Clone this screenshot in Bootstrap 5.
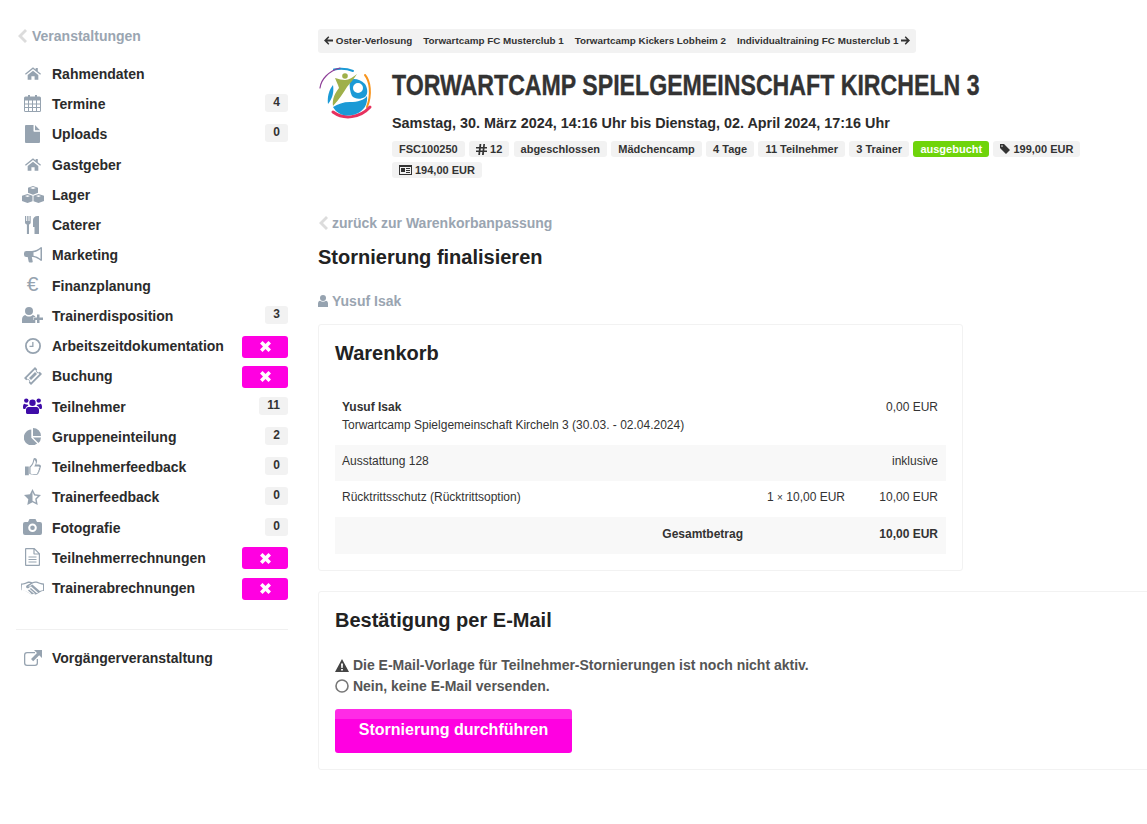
<!DOCTYPE html>
<html lang="de">
<head>
    <meta charset="UTF-8">
    <meta name="viewport" content="width=device-width, initial-scale=1.0">
    <title>Stornierung finalisieren</title>
    <link rel="stylesheet" href="https://cdn.jsdelivr.net/npm/bootstrap@5.3.0/dist/css/bootstrap.min.css">
    <style>
        body { font-family: "Liberation Sans", Arial, sans-serif; color: #333; overflow-x: hidden; font-size: 12px; }
        .page-wrap { padding-top: 26px; }
        .side-col { width: 272px; margin-left: 16px; flex: none; }
        .main-col { margin-left: 30px; width: 829px; flex: none; padding-top: 3px; }
        .grey-link { color: #9aa5b1; font-weight: 700; font-size: 14px; text-decoration: none; }
        .side-back { height: 20px; display: flex; align-items: center; margin-bottom: 13.2px; }
        .chev { width: 9px; height: 14px; margin-right: 5px; margin-left: 2px; fill: #dcdcdc; }
        .side-item { height: 30.25px; display: flex; align-items: center; color: #2b2b2b; font-size: 14px; font-weight: 700; text-decoration: none; position: relative; }
        .side-ic { width: 36px; flex: none; display: flex; justify-content: center; padding-right: 3px; margin-top: -2px; }
        .side-ic svg { fill: #96a3b0; display: block; }
        .side-ic .on { fill: #3f0ca8; }
        .euro-ic { font-size: 21px; font-weight: 400; color: #96a3b0; line-height: 1; margin-top: -5px; }
        .count-pill { margin-left: auto; background: #f2f2f2; color: #333; border-radius: 3px; font-size: 12px; font-weight: 700; line-height: 1; padding: 2px 8px 4px; margin-top: -3px; height: 18px; }
        .x-pill { margin-left: auto; width: 46px; height: 22px; background: #ff00e1; border-radius: 3px; display: flex; align-items: center; justify-content: center; }
        .x-pill svg { fill: #fff; }
        .side-rule { border-top: 1px solid #f0f0f0; margin: 25px 0 14px; opacity: 1; }
        .pager-bar { display: inline-flex; align-items: center; background: #f2f2f2; border-radius: 3px; height: 24px; padding: 0 6px; font-size: 9.85px; font-weight: 700; color: #333; gap: 11px; white-space: nowrap; }
        .pager-bar svg { fill: #333; vertical-align: -1px; }
        .event-head { display: flex; margin-top: 13px; }
        .event-logo { width: 58px; flex: none; margin-right: 16px; height: 56px; }
        .event-title { font-weight: 700; font-size: 29px; line-height: 38px; color: #333; margin: 0; white-space: nowrap; transform: scaleX(.798); transform-origin: left center; -webkit-text-stroke: .35px #333; }
        .event-date { font-size: 14.4px; font-weight: 700; color: #2b2b2b; margin: 9px 0 0; line-height: 20px; }
        .tag-row { display: flex; flex-wrap: wrap; gap: 5px 4.3px; margin-top: 8px; width: 720px; }
        .tag-pill { background: #f2f2f2; color: #333; font-size: 11px; font-weight: 700; border-radius: 3px; padding: 0 7px; height: 16px; line-height: 15px; display: inline-flex; align-items: center; gap: 3px; }
        .tag-pill svg { fill: #333; }
        .tag-green { background: #6fd40b; color: #fff; }
        .back-row { margin-top: 36px; height: 18px; display: flex; align-items: center; }
        .back-row .chev { margin-left: 1px; margin-right: 4px; }
        .page-h { font-size: 20px; font-weight: 700; color: #222; margin: 12px 0 0; line-height: 26px; }
        .person-row { margin-top: 21px; height: 20px; display: flex; align-items: center; gap: 4px; }
        .person-row svg { fill: #96a3b0; }
        .box-card { border: 1px solid #f2f2f2; border-radius: 3px; padding: 15px 16px 16px; }
        .box-h { font-size: 20px; font-weight: 700; color: #222; margin: 0; line-height: 26px; }
        .cart-card { width: 645px; margin-top: 13px; height: 247px; }
        .cart-table { margin: 22px 0 0; font-size: 12px; color: #333; }
        .cart-table td { padding: 0 8px 4px 7px; border: 0; vertical-align: middle; background: transparent; box-shadow: none; }
        .cart-table .tr-plain td { height: 36px; }
        .cart-table .tr-shade td { height: 36px; background: #f8f8f8; }
        .cart-table .tr-total td { height: 37px; background: #f8f8f8; }
        .cart-table .tr-first td { height: 57px; line-height: 18px; vertical-align: top; padding-top: 10px; }
        .times-sign { font-size: 10px; }
        .mail-card { width: 845px; margin-top: 20px; height: 179px; }
        .mail-lines { margin-top: 22px; font-size: 14px; font-weight: 700; color: #555; line-height: 21px; }
        .mail-lines svg { vertical-align: -2px; }
        .go-btn { display: block; width: 237px; height: 44px; margin-top: 12px; padding: 0 0 2px; border: 0; border-radius: 3px; font-size: 16px; font-weight: 700; color: #fff; background: linear-gradient(#ff2be6 0, #ff2be6 10px, #ff00e1 10px); }
        .go-btn:hover { color: #fff; background: #ff00e1; }
    </style>
</head>
<body>
    <svg width="0" height="0" class="position-absolute">
        <defs>
            <symbol id="ic-home" viewBox="0 0 18 14"><path d="M9 0 L12 2.400V.8h2.400v3.600L18 7.300l-.9 1L9 1.800.9 8.300 0 7.300zM3 8.600 9 3.800l6 4.800V14h-4.200v-4H7.200V14H3z"/></symbol>
            <symbol id="ic-cal" viewBox="0 0 17 17"><path fill-rule="evenodd" d="M3 1.500h1V0h2v1.500h5V0h2v1.500h2.500a1.500 1.500 0 0 1 1.500 1.500v12.500a1.500 1.500 0 0 1-1.500 1.500h-14A1.500 1.500 0 0 1 0 15.500V3a1.500 1.500 0 0 1 1.500-1.500zM1 5.500v3h3v-3zm4 0v3h3v-3zm4 0v3h3v-3zm4 0v3h3v-3zM1 9.500v2.500h3V9.500zm4 0v2.500h3V9.500zm4 0v2.500h3V9.500zm4 0v2.500h3V9.500zM1 13v3h3v-3zm4 0v3h3v-3zm4 0v3h3v-3zm4 0v3h3v-3z"/></symbol>
            <symbol id="ic-file" viewBox="0 0 15 18"><path d="M0 1a1 1 0 0 1 1-1h7.500v6a.8.8 0 0 0 .8.8H15V17a1 1 0 0 1-1 1H1a1 1 0 0 1-1-1zM10 0l5 5.300h-5z"/></symbol>
            <symbol id="ic-cubes" viewBox="0 0 22 17"><path d="M11 0l5 1.800v5l-5 1.900-5-1.900v-5zM8 2l3 1.100L14 2l-3-1zM5.500 8l5 1.800v5.400l-5 1.800-5.500-1.900V9.800zM16.500 8l5.500 1.800v5.300L16.500 17l-5-1.800V9.800zM3 10.100l2.500.9 2.500-.9-2.500-.9zM14 10.100l2.500.9 2.500-.9-2.500-.9z"/></symbol>
            <symbol id="ic-fork" viewBox="0 0 15 18"><path d="M0 0h1.200v5h1V0h1.300v5h1V0h1.200v6.500c0 1-.7 1.800-1.700 2.100V18H1.900V8.600C.8 8.300 0 7.500 0 6.500zM9.500 18V11H8V4c0-2.200 1.800-4 4.500-4H14v18z"/></symbol>
            <symbol id="ic-horn" viewBox="0 0 18 16"><path fill-rule="evenodd" d="M17 0a1 1 0 0 1 1 1v4.300a1.800 1.800 0 0 1 0 3.400V13a1 1 0 0 1-1 1c-2.500-2-5-3.500-8-4H7.800l.9 4.300c.1.700-.3 1.300-1 1.300H5.700c-.5 0-.9-.3-1-.8L3.700 10H2.300A2.300 2.300 0 0 1 0 7.700V6.300A2.300 2.300 0 0 1 2.300 4H8c3.500-.3 6.500-2 9-4zM16.500 2c-2.200 1.800-4.500 3-7 3.300v3.400c2.500.3 4.800 1.500 7 3.300z"/></symbol>
            <symbol id="ic-userplus" viewBox="0 0 21 16"><circle cx="7" cy="4" r="4"/><path d="M0 16v-3.500C0 10 1.500 8.300 3.300 8c1 1 2.300 1.500 3.700 1.500S9.700 9 10.700 8c1.200.2 2.200 1 2.800 2h-2v3H13.300v3zM15 7.500h2.500v3H21v2.500h-3.500v3H15v-3h-3v-2.500h3z"/></symbol>
            <symbol id="ic-clock" viewBox="0 0 16 16"><path fill-rule="evenodd" d="M8 0a8 8 0 1 1 0 16A8 8 0 0 1 8 0zm0 1.800a6.200 6.200 0 1 0 0 12.400A6.200 6.200 0 0 0 8 1.800zM7.200 4h1.300v5H4.500V7.700h2.700z"/></symbol>
            <symbol id="ic-ticket" viewBox="0 0 18 18"><path fill-rule="evenodd" d="M11 0l2.200 2.200a1.800 1.800 0 0 0 2.600 2.600L18 7 7 18l-2.200-2.200a1.800 1.800 0 0 0-2.600-2.600L0 11zM11 2.600 2.600 11l.9.900c1.100-.2 2.300.9 2.600 2.600l.9.900L15.400 7l-.8-.8c-1.100.3-2.400-.9-2.800-2.800zM11 5l2 2-6 6-2-2z"/></symbol>
            <symbol id="ic-users" viewBox="0 0 19 16"><circle cx="9.500" cy="4.700" r="3.200"/><circle cx="3.300" cy="2.600" r="2.200"/><circle cx="15.700" cy="2.600" r="2.200"/><path d="M5 9h9c1.300.3 2 1.500 2 3v2.500c0 .9-.7 1.500-1.500 1.500h-10C3.700 16 3 15.400 3 14.500V12c0-1.500.7-2.700 2-3zM0 9c0-2 .6-3 1.500-3.200.8.600 1.700.9 3 .7.300.6.700 1 1 1.300-1.500.3-2.800 1.400-3.200 3.200H1c-.6 0-1-.4-1-2zM19 9c0 1.600-.4 2-1 2h-1.300c-.4-1.800-1.700-2.900-3.200-3.200.3-.3.700-.7 1-1.300 1.300.2 2.200-.1 3-.7.900.2 1.500 1.200 1.500 3.200z"/></symbol>
            <symbol id="ic-pie" viewBox="0 0 17 17"><path d="M7.300 1.500v8.200l5.800 5.800A8 8 0 1 1 7.300 1.500zM9 0a8 8 0 0 1 8 8H9zM9 9.500h8a8 8 0 0 1-2.500 5.500z"/></symbol>
            <symbol id="ic-thumb" viewBox="0 0 16 18"><path fill-rule="evenodd" d="M0 8.500h3.800v8.800H0zM9.500 0c1.600 0 2.600 1.200 2.600 3 0 1.200-.5 2.500-1 3.400h3c1 0 1.900.9 1.900 1.900 0 .8-.3 1.300-.7 1.700.2 1.100-.1 1.800-.7 2.300.1 1-.2 1.800-.9 2.300-.1 1.500-1.100 2.400-2.900 2.400H8.900c-1.800 0-3-.6-4.600-1.200V8.700c1.700-.8 3-3 3.600-5.200C8.300 2 8.400 0 9.500 0zm0 1.300c-.3.600-.3 1.500-.6 2.500-.6 2.300-1.900 4.500-3.400 5.600v6c1.300.5 2.300.9 3.500.9h1.800c1.300 0 1.700-.6 1.600-1.700.7-.3 1-1 .8-2 .7-.4.8-1.100.5-2 .6-.3.900-.8.800-1.300 0-.4-.4-.7-.8-.7H9.200c.6-1 1.600-2.500 1.600-3.900 0-1.200-.6-2.100-1.300-2.400z"/></symbol>
            <symbol id="ic-star" viewBox="0 0 17 16"><path fill-rule="evenodd" d="M8.500 0l2.600 5.300 5.900.8-4.300 4.100 1 5.800-5.200-2.700-5.200 2.700 1-5.800L0 6.100l5.900-.8zm0 3v8.700l3.300 1.700-.6-3.700 2.700-2.600-3.700-.5z"/></symbol>
            <symbol id="ic-cam" viewBox="0 0 19 16"><path fill-rule="evenodd" d="M6.500 0h6L14 3h3a2 2 0 0 1 2 2v9a2 2 0 0 1-2 2H2a2 2 0 0 1-2-2V5a2 2 0 0 1 2-2h3zM9.500 4.500a4.300 4.300 0 1 0 0 8.600 4.300 4.300 0 0 0 0-8.600zm0 2a2.300 2.300 0 1 1 0 4.600 2.300 2.300 0 0 1 0-4.600z"/></symbol>
            <symbol id="ic-doc" viewBox="0 0 15 18"><path fill-rule="evenodd" d="M1 0h8.500L15 5.500V17a1 1 0 0 1-1 1H1a1 1 0 0 1-1-1V1a1 1 0 0 1 1-1zm.2 1.200v15.600h12.600V6.600H9.200a.8.800 0 0 1-.8-.8V1.200zM9.600 1.700v3.700h3.700zM3.500 8.500h8v1.100h-8zM3.500 11h8v1.100h-8zM3.500 13.500h8v1.100h-8z"/></symbol>
            <symbol id="ic-shake" viewBox="0 0 23 14"><path fill-rule="evenodd" d="M0 2.500c1.700 0 3.500-.5 6-1.500 1.500-.6 3.200-.6 5.200.2 2-.9 3.700-1 5.300-.4 2.300 1 4.500 1.700 6.500 1.700v7.500c-1 0-1.900.1-2.800.4l-4.800 2.800c-.9.500-1.800.2-2.400-.4-.9.700-1.900.6-2.600 0l-.6.100-5.100-3c-1-.5-2.200-.7-4.200-.7zM1 3.700v5.600c1.400.1 2.800.3 3.900 1l4.900 2.900c.3.100.8 0 1-.3L7 9.600l1-1 4.800 4c.4.200.8.200 1.100-.1l-5-4.600 1-1 5.700 5c.3.200.8.200 1.100-.1l.2-.4-7-6.100-2.200 1.600c-1 .6-2.400.2-2.600-1-.1-.5.100-1 .5-1.400L9.500 2.200C8.500 1.900 7.500 2 6.500 2.300 4.500 3.100 2.700 3.600 1 3.700zm21 0c-1.900-.1-3.800-.8-5.800-1.600-1.800-.7-3.300-.3-5 .6L7.800 5c-.4.400 0 1 .6.600l3-2.100 7.400 6.500c.8-.4 2-.6 3.200-.7z"/></symbol>
            <symbol id="ic-ext" viewBox="0 0 18 16"><path fill-rule="evenodd" d="M3 2h8v1.300H3a1.700 1.700 0 0 0-1.700 1.700v8A1.700 1.700 0 0 0 3 14.700h8a1.700 1.700 0 0 0 1.700-1.700V9H14v4a3 3 0 0 1-3 3H3a3 3 0 0 1-3-3V5a3 3 0 0 1 3-3z"/><path d="M10 0h8v8l-2.800-2.800-6 6-2.200-2.200 6-6z"/></symbol>
            <symbol id="ic-x" viewBox="0 0 10 10"><path d="M2.300 0 5 2.700 7.700 0 10 2.300 7.300 5 10 7.700 7.700 10 5 7.300 2.300 10 0 7.700 2.700 5 0 2.300z"/></symbol>
            <symbol id="ic-chev" viewBox="0 0 9 14"><path d="M7 0l2 2-5 5 5 5-2 2-7-7z"/></symbol>
        </defs>
    </svg>

    <div class="page-wrap d-flex align-items-start">
        <aside class="side-col">
            <a href="#" class="grey-link side-back"><svg class="chev"><use href="#ic-chev"/></svg>Veranstaltungen</a>
            <nav class="d-flex flex-column">
                <a href="#" class="side-item"><span class="side-ic"><svg width="16" height="13"><use href="#ic-home"/></svg></span>Rahmendaten</a>
                <a href="#" class="side-item"><span class="side-ic"><svg width="17" height="17"><use href="#ic-cal"/></svg></span>Termine<span class="count-pill">4</span></a>
                <a href="#" class="side-item"><span class="side-ic"><svg width="15" height="18"><use href="#ic-file"/></svg></span>Uploads<span class="count-pill">0</span></a>
                <a href="#" class="side-item"><span class="side-ic"><svg width="16" height="13"><use href="#ic-home"/></svg></span>Gastgeber</a>
                <a href="#" class="side-item"><span class="side-ic"><svg width="22" height="17"><use href="#ic-cubes"/></svg></span>Lager</a>
                <a href="#" class="side-item"><span class="side-ic"><svg width="15" height="18"><use href="#ic-fork"/></svg></span>Caterer</a>
                <a href="#" class="side-item"><span class="side-ic"><svg width="18" height="16"><use href="#ic-horn"/></svg></span>Marketing</a>
                <a href="#" class="side-item"><span class="side-ic euro-ic">€</span>Finanzplanung</a>
                <a href="#" class="side-item"><span class="side-ic"><svg width="21" height="16"><use href="#ic-userplus"/></svg></span>Trainerdisposition<span class="count-pill">3</span></a>
                <a href="#" class="side-item"><span class="side-ic"><svg width="16" height="16"><use href="#ic-clock"/></svg></span>Arbeitszeitdokumentation<span class="x-pill"><svg width="11" height="11"><use href="#ic-x"/></svg></span></a>
                <a href="#" class="side-item"><span class="side-ic"><svg width="18" height="18"><use href="#ic-ticket"/></svg></span>Buchung<span class="x-pill"><svg width="11" height="11"><use href="#ic-x"/></svg></span></a>
                <a href="#" class="side-item"><span class="side-ic"><svg class="on" width="19" height="16"><use href="#ic-users"/></svg></span>Teilnehmer<span class="count-pill">11</span></a>
                <a href="#" class="side-item"><span class="side-ic"><svg width="17" height="17"><use href="#ic-pie"/></svg></span>Gruppeneinteilung<span class="count-pill">2</span></a>
                <a href="#" class="side-item"><span class="side-ic"><svg width="16" height="18"><use href="#ic-thumb"/></svg></span>Teilnehmerfeedback<span class="count-pill">0</span></a>
                <a href="#" class="side-item"><span class="side-ic"><svg width="17" height="16"><use href="#ic-star"/></svg></span>Trainerfeedback<span class="count-pill">0</span></a>
                <a href="#" class="side-item"><span class="side-ic"><svg width="19" height="16"><use href="#ic-cam"/></svg></span>Fotografie<span class="count-pill">0</span></a>
                <a href="#" class="side-item"><span class="side-ic"><svg width="15" height="18"><use href="#ic-doc"/></svg></span>Teilnehmerrechnungen<span class="x-pill"><svg width="11" height="11"><use href="#ic-x"/></svg></span></a>
                <a href="#" class="side-item"><span class="side-ic"><svg width="23" height="14"><use href="#ic-shake"/></svg></span>Trainerabrechnungen<span class="x-pill"><svg width="11" height="11"><use href="#ic-x"/></svg></span></a>
            </nav>
            <hr class="side-rule">
            <a href="#" class="side-item"><span class="side-ic"><svg width="18" height="16"><use href="#ic-ext"/></svg></span>Vorgängerveranstaltung</a>
        </aside>

        <main class="main-col">
            <div class="pager-bar">
                <span><svg width="9" height="9" viewBox="0 0 9 9"><path d="M4.300.3l1 1-2 2.200H9v2H3.300l2 2.200-1 1L0 4.500z"/></svg> Oster-Verlosung</span>
                <span>Torwartcamp FC Musterclub 1</span>
                <span>Torwartcamp Kickers Lobheim 2</span>
                <span>Individualtraining FC Musterclub 1 <svg width="9" height="9" viewBox="0 0 9 9"><path d="M4.700.3l-1 1 2 2.200H0v2h5.700l-2 2.200 1 1L9 4.500z"/></svg></span>
            </div>

            <div class="event-head">
                <svg class="event-logo" viewBox="0 0 58 56">
                    <g fill="none" stroke-linecap="round">
                        <path d="M16 3.500C22 2.500 30 3 35 5" stroke="#1b9ad6" stroke-width="2"/>
                        <path d="M47 9C52 15 54 28 49 41" stroke="#f7941d" stroke-width="2"/>
                        <path d="M2 22C3 13 11 5 22 2" stroke="#8e3f98" stroke-width="1.200"/>
                        <path d="M15 46C26 54 42 52 52 41" stroke="#e6325f" stroke-width="3"/>
                    </g>
                    <path fill="#1b9ad6" d="M15 41C20 38 25 36 32 36 40 36 46 34 49 30 50 38 46 45 38 48 30 51 20 50 15 41z"/>
                    <path fill-rule="evenodd" fill="#1b9ad6" d="M32 14C36 12 42 13 47 18 50 23 50 28 47 31 42 34 37 33 34 30 32 26 31 20 32 14zM40 17a5 5 0 1 0 0 10 5 5 0 0 0 0-10z"/>
                    <path fill="#1b9ad6" d="M10 38C9 31 11 24 15 19 16 25 15 32 10 38z"/>
                    <path fill="#9fb04a" d="M17 12C21 13 24 14 27 14 31 14 35 11 39 8 36 13 32 17 29 21 25 27 21 34 15 40 14 33 17 27 21 22 20 18 18 15 17 12z"/>
                    <circle cx="27" cy="10" r="2.800" fill="#9fb04a"/>
                </svg>
                <div>
                    <h1 class="event-title">TORWARTCAMP SPIELGEMEINSCHAFT KIRCHELN 3</h1>
                    <p class="event-date">Samstag, 30. März 2024, 14:16 Uhr bis Dienstag, 02. April 2024, 17:16 Uhr</p>
                    <div class="tag-row">
                        <span class="tag-pill">FSC100250</span>
                        <span class="tag-pill"><svg width="11" height="11" viewBox="0 0 11 11"><path fill-rule="evenodd" d="M3.500 0h1.800L5 3h2l.3-3H9l-.3 3H11v1.600H8.500L8.300 6.400H11V8H8.100L7.800 11H6l.3-3h-2L4 11H2.300l.3-3H0V6.400h2.800L3 4.600H0V3h3.200zM4.800 4.600l-.2 1.800h2l.2-1.800z"/></svg> 12</span>
                        <span class="tag-pill">abgeschlossen</span>
                        <span class="tag-pill">Mädchencamp</span>
                        <span class="tag-pill">4 Tage</span>
                        <span class="tag-pill">11 Teilnehmer</span>
                        <span class="tag-pill">3 Trainer</span>
                        <span class="tag-pill tag-green">ausgebucht</span>
                        <span class="tag-pill"><svg width="10" height="10" viewBox="0 0 10 10"><path fill-rule="evenodd" d="M0 0h4l6 6-4 4-6-6zM2 1.300a.8.800 0 1 0 0 1.600.8.800 0 0 0 0-1.600z"/></svg> 199,00 EUR</span>
                        <span class="tag-pill"><svg width="13" height="10" viewBox="0 0 13 10"><path fill-rule="evenodd" d="M0 0h13v10H0zM1 2v7h11V2zM2 3h4v4H2zM7 3h4v1H7zM7 5h4v1H7zM7 7h4v1H7z"/></svg> 194,00 EUR</span>
                    </div>
                </div>
            </div>

            <a href="#" class="grey-link back-row"><svg class="chev"><use href="#ic-chev"/></svg>zurück zur Warenkorbanpassung</a>
            <h2 class="page-h">Stornierung finalisieren</h2>
            <div class="grey-link person-row"><svg width="10" height="12" viewBox="0 0 10 12"><circle cx="5" cy="3" r="3"/><path d="M0 12V8.500C0 7 1 6 2 5.800c1.700 1.200 4.300 1.200 6 0 1 .2 2 1.200 2 2.700V12z"/></svg>Yusuf Isak</div>

            <section class="box-card cart-card">
                <h3 class="box-h">Warenkorb</h3>
                <table class="table cart-table">
                    <colgroup><col><col style="width:200px"><col style="width:102px"><col style="width:93px"></colgroup>
                    <tbody>
                        <tr class="tr-first">
                            <td colspan="3"><strong>Yusuf Isak</strong><br>Torwartcamp Spielgemeinschaft Kircheln 3 (30.03. - 02.04.2024)</td>
                            <td class="text-end">0,00 EUR</td>
                        </tr>
                        <tr class="tr-shade">
                            <td colspan="3">Ausstattung 128</td>
                            <td class="text-end">inklusive</td>
                        </tr>
                        <tr class="tr-plain">
                            <td colspan="2">Rücktrittsschutz (Rücktrittsoption)</td>
                            <td class="text-end">1 <span class="times-sign">×</span> 10,00 EUR</td>
                            <td class="text-end">10,00 EUR</td>
                        </tr>
                        <tr class="tr-total">
                            <td class="text-end fw-bold" colspan="2">Gesamtbetrag</td>
                            <td></td>
                            <td class="text-end fw-bold">10,00 EUR</td>
                        </tr>
                    </tbody>
                </table>
            </section>

            <section class="box-card mail-card">
                <h3 class="box-h">Bestätigung per E-Mail</h3>
                <div class="mail-lines">
                    <div><svg width="14" height="13" viewBox="0 0 14 13"><path fill="#444" fill-rule="evenodd" d="M7 0l7 13H0zM6 4.500l.3 4.500h1.400L8 4.500zM6.100 10v1.600h1.800V10z"/></svg> Die E-Mail-Vorlage für Teilnehmer-Stornierungen ist noch nicht aktiv.</div>
                    <div><svg width="14" height="14" viewBox="0 0 14 14"><circle cx="7" cy="7" r="6" fill="#fff" stroke="#777" stroke-width="1.600"/></svg> Nein, keine E-Mail versenden.</div>
                </div>
                <button type="button" class="btn go-btn">Stornierung durchführen</button>
            </section>
        </main>
    </div>

    <script src="https://cdn.jsdelivr.net/npm/bootstrap@5.3.0/dist/js/bootstrap.bundle.min.js"></script>
</body>
</html>
